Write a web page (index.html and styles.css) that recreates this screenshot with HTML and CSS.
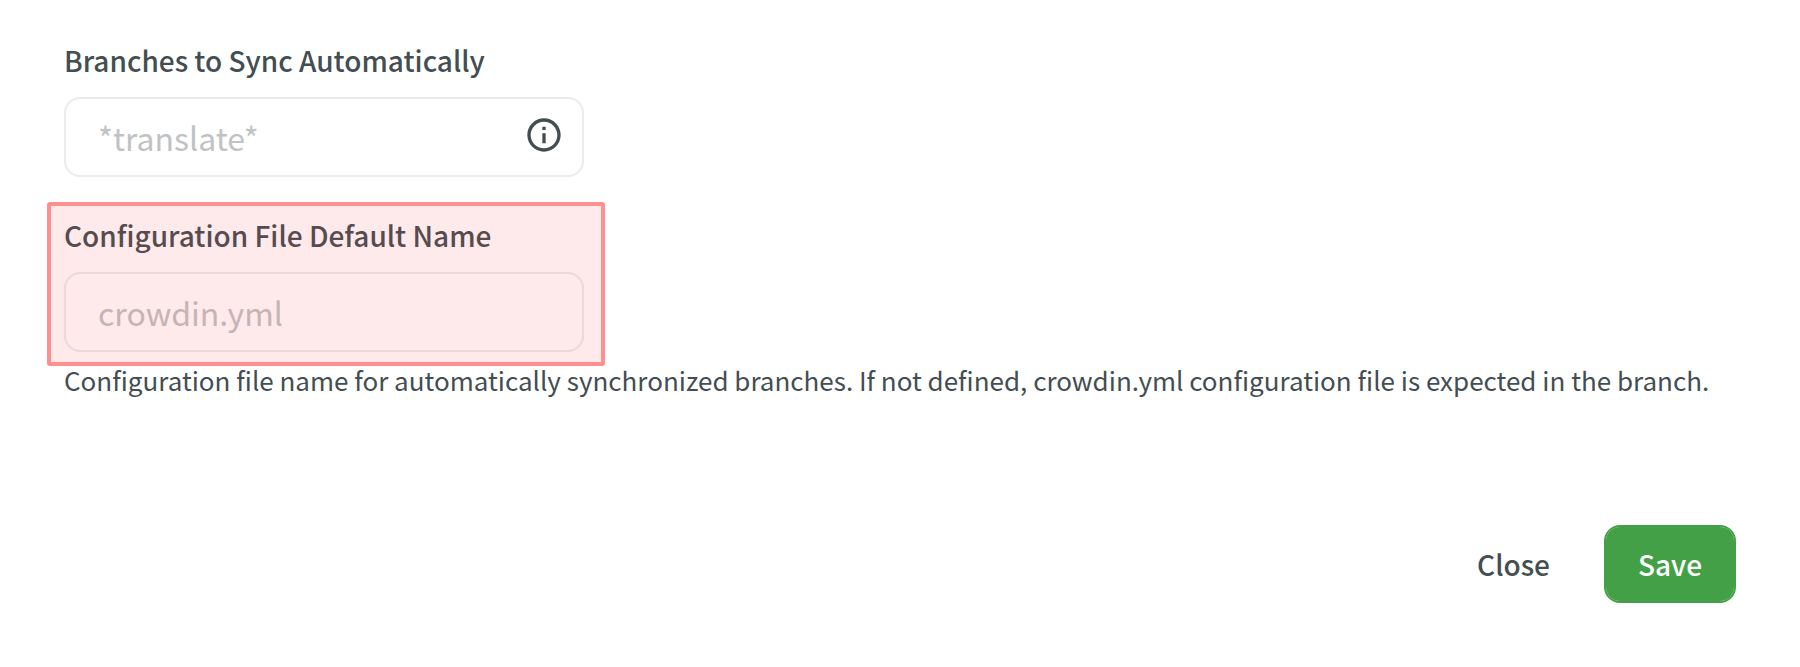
FILE: index.html
```html
<!DOCTYPE html>
<html lang="en">
<head>
<meta charset="utf-8">
<title>Branch settings</title>
<link rel="stylesheet" href="styles.css">
</head>
<body>
<form class="dialog">
  <section class="group">
    <label class="label">Branches to Sync Automatically</label>
    <div class="field">
      <span class="placeholder">*translate*</span>
      <svg class="info" viewBox="0 0 24 24"><path d="M11 17h2v-6h-2v6zm1-15C6.480 2 2 6.480 2 12s4.480 10 10 10 10-4.480 10-10S17.520 2 12 2zm0 18c-4.410 0-8-3.590-8-8s3.590-8 8-8 8 3.590 8 8-3.590 8-8 8zM11 9h2V7h-2v2z"/></svg>
    </div>
  </section>
  <section class="group config">
    <label class="label">Configuration File Default Name</label>
    <div class="field">
      <span class="placeholder">crowdin.yml</span>
    </div>
    <div class="highlight"></div>
  </section>
  <p class="help">Configuration file name for automatically synchronized branches. If not defined, crowdin.yml configuration file is expected in the branch.</p>
  <footer class="actions">
    <button type="button" class="btn">Close</button>
    <button type="button" class="btn primary">Save</button>
  </footer>
</form>
</body>
</html>
```
FILE: styles.css
```css
* { box-sizing: border-box; }
body { margin: 0; background: #fff; color: #434e52; font-family: "Noto Sans CJK SC", "Noto Sans", sans-serif; }
.dialog { width: 1800px; height: 667px; padding: 40px 64px 0; overflow: hidden; }
.label { display: block; height: 40px; line-height: 40px; font-size: 28px; font-weight: 500; white-space: nowrap; }
.field { display: flex; align-items: center; justify-content: space-between; width: 520px; height: 80px; margin-top: 17px; padding: 0 18px 0 32px; border: 2px solid #ebebeb; border-radius: 16px; }
.placeholder { font-size: 32px; line-height: 40px; color: #bfc3c4; }
.info { width: 40px; height: 40px; margin-bottom: 4px; fill: #434e52; }
.config { position: relative; margin-top: 38px; }
.highlight { position: absolute; left: -17px; top: -13px; width: 558px; height: 164px; border: 4px solid #ff8f8f; border-radius: 3px; background: rgba(255, 50, 60, 0.1); }
.help { margin: 8px 0 0; height: 40px; line-height: 40px; font-size: 26px; white-space: nowrap; }
.actions { display: flex; justify-content: flex-end; margin-top: 125px; }
.btn { height: 78px; padding: 0 32px; border: 2px solid transparent; border-radius: 16px; background: none; color: inherit; font: 500 28px "Noto Sans CJK SC", sans-serif; }
.primary { margin-left: 20px; border-color: #43a047; background: #43a047; background-clip: padding-box; color: #fff; }
```
